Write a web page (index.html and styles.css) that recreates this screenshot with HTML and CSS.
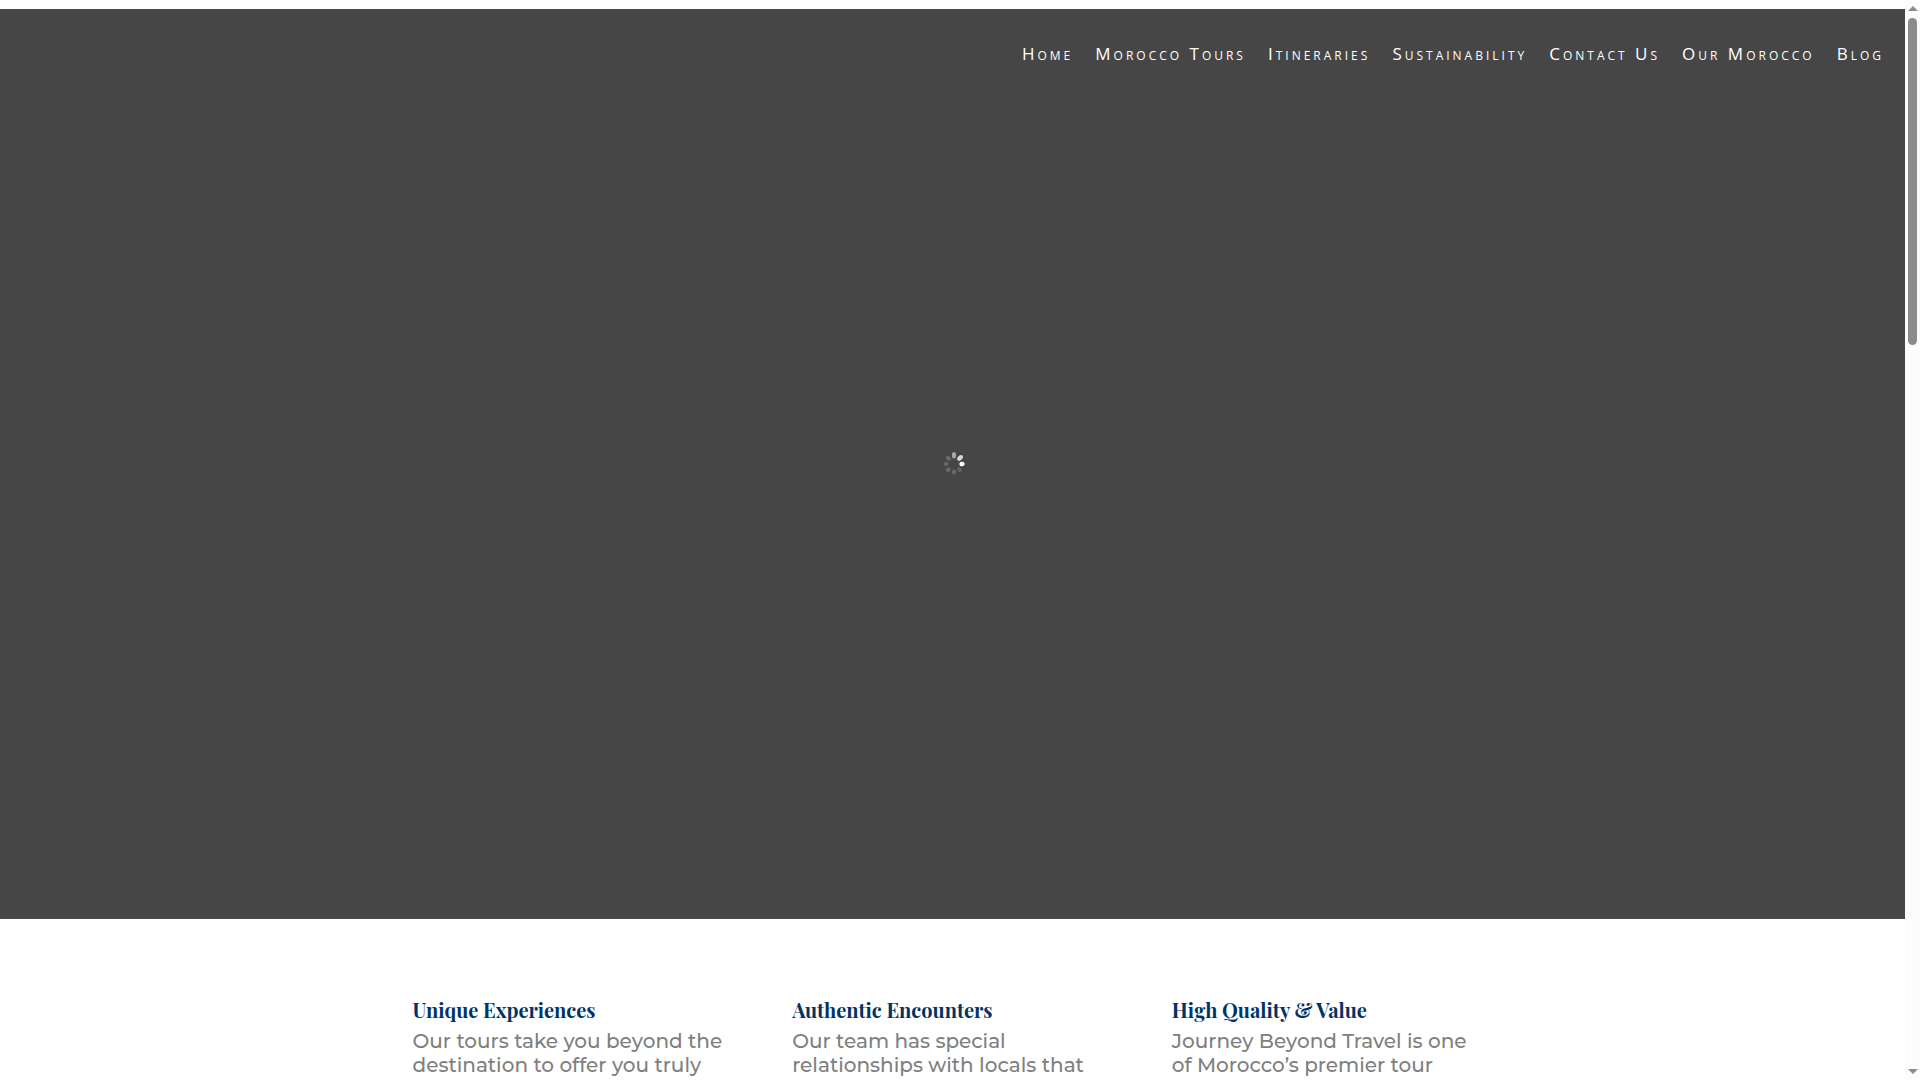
FILE: index.html
```html
<!DOCTYPE html>
<html lang="en">
  <head>
    <meta charset="utf-8">
    <title>Journey Beyond Travel</title>
    <link rel="stylesheet" href="styles.css">
  </head>
  <body>
    <div class="page">
      <header class="hero">
        <nav class="menu">
          <a href="#">Home</a>
          <a href="#">Morocco Tours</a>
          <a href="#">Itineraries</a>
          <a href="#">Sustainability</a>
          <a href="#">Contact Us</a>
          <a href="#">Our Morocco</a>
          <a href="#">Blog</a>
        </nav>
        <svg class="loader" viewBox="0 0 24 24" aria-hidden="true">
          <ellipse cx="13" cy="3.2" rx="2.1" ry="3.2" fill="#a8a8a8"/>
          <ellipse cx="13" cy="3.4" rx="2.2" ry="3.4" fill="#d6d6d6" transform="rotate(45 13 12)"/>
          <ellipse cx="13" cy="4" rx="2.3" ry="2.6" fill="#fff" transform="rotate(90 13 12)"/>
          <ellipse cx="13" cy="4" rx="2.1" ry="2.4" fill="#626262" transform="rotate(135 13 12)"/>
          <ellipse cx="13" cy="4" rx="2.1" ry="2.6" fill="#696969" transform="rotate(180 13 12)"/>
          <ellipse cx="13" cy="4" rx="2.1" ry="2.6" fill="#696969" transform="rotate(225 13 12)"/>
          <ellipse cx="13" cy="4" rx="2.1" ry="2.5" fill="#696969" transform="rotate(270 13 12)"/>
          <ellipse cx="13" cy="4" rx="2.1" ry="2.8" fill="#696969" transform="rotate(315 13 12)"/>
        </svg>
      </header>
      <section class="features">
        <div class="feature">
          <h4>Unique Experiences</h4>
          <p>Our tours take you beyond the<br>destination to offer you truly</p>
        </div>
        <div class="feature">
          <h4>Authentic Encounters</h4>
          <p>Our team has special<br>relationships with locals that</p>
        </div>
        <div class="feature">
          <h4>High Quality &amp; Value</h4>
          <p>Journey Beyond Travel is one<br>of Morocco’s premier tour</p>
        </div>
      </section>
    </div>
    <div class="scrollbar" aria-hidden="true">
      <div class="arrow up"></div>
      <div class="track"><div class="thumb"></div></div>
      <div class="arrow down"></div>
    </div>
  </body>
</html>
```

FILE: styles.css
```css
*{
  box-sizing: border-box;
}
body{
  margin: 0;
  height: 100vh;
  display: flex;
  overflow: hidden;
  background: #fff;
  color: #808080;
  font-family: Montserrat, "Open Sans", sans-serif;
}
.page{
  flex: 1;
  min-width: 0;
  padding-top: 9px;
}

/* hero */
.hero{
  height: calc(100vh - 170px);
  background: #464646;
  display: grid;
  grid-template-rows: 1fr auto 1fr;
}
.menu{
  display: flex;
  justify-content: flex-end;
  align-items: flex-start;
  gap: 22px;
  padding: 33px 21px 0 0;
}
.menu a{
  color: #fff;
  font-family: "Open Sans", sans-serif;
  font-size: 17px;
  line-height: 24px;
  letter-spacing: 3px;
  font-variant: small-caps;
  text-decoration: none;
  white-space: nowrap;
}
.loader{
  width: 24px;
  height: 24px;
  justify-self: center;
}

/* features */
.features{
  width: 80%;
  max-width: 1080px;
  margin: 0 auto;
  padding-top: 79px;
  display: grid;
  grid-template-columns: repeat(3, 1fr);
  gap: 59px;
}
.feature h4{
  margin: 0;
  padding-bottom: 7px;
  color: #003366;
  font-family: "Playfair Display", "Liberation Serif", serif;
  font-size: 20px;
  font-weight: bold;
  line-height: 24px;
}
.feature p{
  margin: 0;
  font-size: 20px;
  font-weight: 500;
  line-height: 24px;
}

/* scrollbar */
.scrollbar{
  width: 15px;
  background: #fcfcfc;
  display: flex;
  flex-direction: column;
  align-items: center;
  padding: 6px 0;
}
.arrow{
  border: 5px solid transparent;
}
.up{
  border-top: 0;
  border-bottom-color: #8b8b8b;
}
.down{
  border-bottom: 0;
  border-top-color: #8b8b8b;
}
.track{
  flex: 1;
  padding: 7px 0;
}
.thumb{
  width: 9px;
  height: 327px;
  border-radius: 5px;
  background: #8b8b8b;
}
```
